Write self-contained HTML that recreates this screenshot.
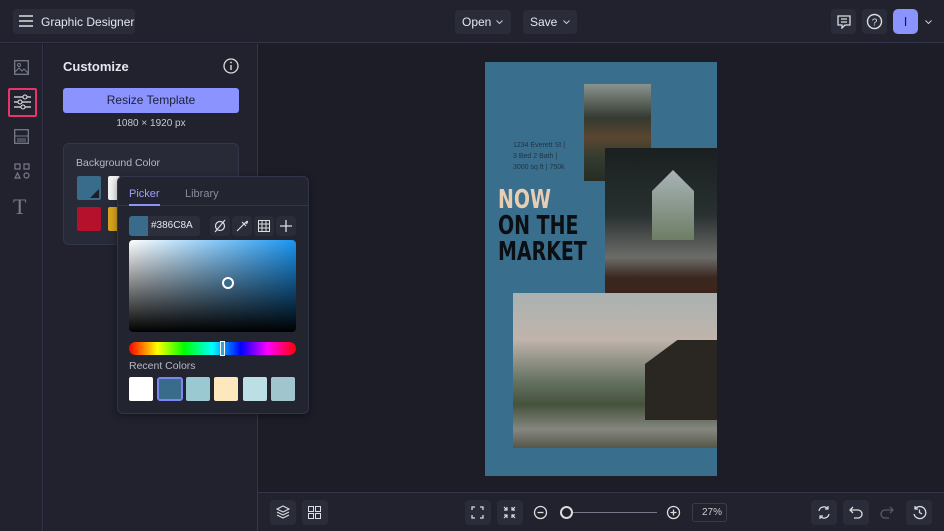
<!DOCTYPE html>
<html><head><meta charset="utf-8"><style>
*{box-sizing:border-box;margin:0;padding:0}
body{width:944px;height:531px;overflow:hidden;background:#1c1d27;font-family:"Liberation Sans",sans-serif;color:#e6e6ee;position:relative}
.abs{position:absolute}
.btn{position:absolute;background:#2a2c39;border-radius:4px}
svg{display:block}
</style></head><body>
<!-- top bar -->
<div class="abs" style="left:0;top:0;width:944px;height:43px;background:#21222e;border-bottom:1px solid #33354a"></div>
<div class="btn" style="left:13px;top:9px;width:122px;height:25px"></div>
<svg class="abs" style="left:19px;top:15px" width="14" height="12"><path d="M0 1H14M0 6H14M0 11H14" stroke="#ddd" stroke-width="1.5"/></svg>
<div class="abs" style="left:41px;top:15px;font-size:12px;color:#e6e6ee">Graphic Designer</div>
<div class="btn" style="left:455px;top:10px;width:56px;height:24px"></div>
<div class="abs" style="left:462px;top:15px;font-size:12px">Open</div>
<svg class="abs" style="left:496px;top:20px" width="7" height="4"><path d="M.5 .5L3.5 3.5L6.5 .5" fill="none" stroke="#ccc"/></svg>
<div class="btn" style="left:523px;top:10px;width:54px;height:24px"></div>
<div class="abs" style="left:530px;top:15px;font-size:12px">Save</div>
<svg class="abs" style="left:563px;top:20px" width="7" height="4"><path d="M.5 .5L3.5 3.5L6.5 .5" fill="none" stroke="#ccc"/></svg>
<div class="btn" style="left:831px;top:9px;width:25px;height:25px"></div>
<svg class="abs" style="left:837px;top:15px" width="14" height="14"><path d="M1 1H13V10H8L5 13V10H1Z M4 4H10 M4 7H10" fill="none" stroke="#ddd" stroke-width="1.3"/></svg>
<div class="btn" style="left:862px;top:9px;width:25px;height:25px"></div>
<svg class="abs" style="left:866px;top:13px" width="17" height="17"><circle cx="8.5" cy="8.5" r="7" fill="none" stroke="#ddd" stroke-width="1.4"/><text x="8.5" y="12.5" font-size="10" fill="#ddd" text-anchor="middle" font-family="Liberation Sans">?</text></svg>
<div class="abs" style="left:893px;top:9px;width:25px;height:25px;background:#8b93ff;border-radius:5px;color:#1a1a2a;font-size:13px;text-align:center;line-height:25px">I</div>
<svg class="abs" style="left:925px;top:20px" width="7" height="4"><path d="M.5 .5L3.5 3.5L6.5 .5" fill="none" stroke="#ccc"/></svg>

<!-- icon sidebar -->
<div class="abs" style="left:0;top:44px;width:43px;height:487px;background:#21222e;border-right:1px solid #33354a"></div>
<svg class="abs" style="left:14px;top:60px" width="15" height="15"><rect x="0.7" y="0.7" width="13.6" height="13.6" fill="none" stroke="#777a8c" stroke-width="1.3"/><circle cx="5" cy="5" r="1.5" fill="none" stroke="#777a8c"/><path d="M1 12L5 8L8 11L10 9L14 13" fill="none" stroke="#777a8c"/></svg>
<div class="abs" style="left:8px;top:88px;width:29px;height:29px;border:2px solid #e8336b;border-radius:2px"></div>
<svg class="abs" style="left:14px;top:94px" width="17" height="16"><path d="M0 3H17M0 8H17M0 13H17" stroke="#e6e6ee" stroke-width="1.3"/><circle cx="11" cy="3" r="2" fill="#21222e" stroke="#e6e6ee"/><circle cx="6" cy="8" r="2" fill="#21222e" stroke="#e6e6ee"/><circle cx="9" cy="13" r="2" fill="#21222e" stroke="#e6e6ee"/></svg>
<svg class="abs" style="left:14px;top:129px" width="15" height="15"><rect x="0.7" y="0.7" width="13.6" height="13.6" fill="none" stroke="#777a8c" stroke-width="1.3"/><path d="M1 7H14M3 10H12M3 12H12" stroke="#777a8c"/></svg>
<svg class="abs" style="left:14px;top:163px" width="16" height="16"><rect x="1" y="1" width="5" height="5" fill="none" stroke="#777a8c" stroke-width="1.2"/><rect x="10" y="1" width="5" height="5" fill="none" stroke="#777a8c" stroke-width="1.2"/><path d="M3.5 10L6 15H1Z" fill="none" stroke="#777a8c" stroke-width="1.2"/><circle cx="12.5" cy="12.5" r="2.5" fill="none" stroke="#777a8c" stroke-width="1.2"/></svg>
<div class="abs" style="left:13px;top:194px;font-family:'Liberation Serif',serif;font-size:22px;color:#777a8c">T</div>

<!-- panel -->
<div class="abs" style="left:44px;top:44px;width:214px;height:487px;background:#21222e;border-right:1px solid #33354a"></div>
<div class="abs" style="left:63px;top:59px;font-size:13px;font-weight:bold">Customize</div>
<svg class="abs" style="left:223px;top:58px" width="16" height="16"><circle cx="8" cy="8" r="7" fill="none" stroke="#ddd" stroke-width="1.3"/><path d="M8 7V12" stroke="#ddd" stroke-width="1.4"/><circle cx="8" cy="4.5" r="0.9" fill="#ddd"/></svg>
<div class="abs" style="left:63px;top:88px;width:176px;height:25px;background:#8b93ff;border-radius:3px;color:#1d1f3a;font-size:12px;text-align:center;line-height:25px">Resize Template</div>
<div class="abs" style="left:63px;top:118px;width:176px;text-align:center;font-size:10px;color:#c8c8d2">1080 × 1920 px</div>
<div class="abs" style="left:63px;top:143px;width:176px;height:102px;background:#282a37;border:1px solid #33354a;border-radius:6px"></div>
<div class="abs" style="left:76px;top:157px;font-size:10.5px;color:#b8b8c4">Background Color</div>
<div class="abs" style="left:77px;top:176px;width:24px;height:24px;background:#386c8a;border-radius:2px;overflow:hidden"><div style="position:absolute;right:2px;bottom:2px;width:0;height:0;border-left:9px solid transparent;border-bottom:9px solid #1c1d27"></div></div>
<div class="abs" style="left:108px;top:176px;width:12px;height:24px;background:#f2f2f2;border-radius:2px"></div>
<div class="abs" style="left:77px;top:207px;width:24px;height:24px;background:#b5102c;border-radius:2px"></div>
<div class="abs" style="left:108px;top:207px;width:12px;height:24px;background:#d8a41f;border-radius:2px"></div>

<!-- popup -->
<div class="abs" style="left:117px;top:176px;width:192px;height:238px;background:#222430;border:1px solid #33354a;border-radius:6px;box-shadow:0 2px 8px rgba(0,0,0,.4)"></div>
<div class="abs" style="left:118px;top:205px;width:190px;height:1px;background:#33354a"></div>
<div class="abs" style="left:129px;top:188px;font-size:11px;color:#9ba1ff">Picker</div>
<div class="abs" style="left:129px;top:204px;width:31px;height:2px;background:#8b93ff"></div>
<div class="abs" style="left:185px;top:188px;font-size:11px;color:#8a8c9c">Library</div>
<div class="abs" style="left:129px;top:216px;width:71px;height:20px;background:#2c2e3b;border-radius:3px"></div>
<div class="abs" style="left:129px;top:216px;width:19px;height:20px;background:#386c8a;border-radius:3px 0 0 3px"></div>
<div class="abs" style="left:151px;top:220px;font-size:10px;color:#e6e6ee">#386C8A</div>
<div class="btn" style="left:210px;top:216px;width:20px;height:20px"></div>
<svg class="abs" style="left:213px;top:219px" width="14" height="14"><circle cx="7" cy="7" r="4.5" fill="none" stroke="#ddd" stroke-width="1.2"/><path d="M2 13L12 1" stroke="#ddd" stroke-width="1.2"/></svg>
<div class="btn" style="left:232px;top:216px;width:20px;height:20px"></div>
<svg class="abs" style="left:235px;top:219px" width="14" height="14"><path d="M2 12L9 5M7 3L11 7M9 5L11 3Q12 2 12.5 2.5Q13 3 11 5" fill="none" stroke="#ddd" stroke-width="1.2"/></svg>
<div class="btn" style="left:254px;top:216px;width:20px;height:20px"></div>
<svg class="abs" style="left:258px;top:220px" width="12" height="12"><path d="M0.5 0.5H11.5V11.5H0.5ZM4 0.5V11.5M8 0.5V11.5M0.5 4H11.5M0.5 8H11.5" fill="none" stroke="#ddd"/></svg>
<div class="btn" style="left:276px;top:216px;width:20px;height:20px"></div>
<svg class="abs" style="left:280px;top:220px" width="12" height="12"><path d="M6 0V12M0 6H12" stroke="#ddd" stroke-width="1.3"/></svg>
<div class="abs" style="left:129px;top:240px;width:167px;height:92px;border-radius:4px;background:linear-gradient(to bottom,transparent,#000),linear-gradient(to right,#fff,#1a95f0)"></div>
<div class="abs" style="left:222px;top:277px;width:12px;height:12px;border:2px solid #fff;border-radius:50%;background:#386c8a"></div>
<div class="abs" style="left:129px;top:342px;width:167px;height:13px;border-radius:7px;background:linear-gradient(to right,#f00,#ff0 17%,#0f0 33%,#0ff 50%,#00f 67%,#f0f 83%,#f00)"></div>
<div class="abs" style="left:220px;top:341px;width:5px;height:15px;border:1px solid #fff;background:#3aa0d0"></div>
<div class="abs" style="left:129px;top:360px;font-size:10.5px;color:#b8b8c4">Recent Colors</div>
<div class="abs" style="left:129px;top:377px;width:24px;height:24px;background:#fff;border-radius:2px"></div>
<div class="abs" style="left:157px;top:377px;width:26px;height:24px;background:#386c8a;border:2px solid #7c86f0;border-radius:3px"></div>
<div class="abs" style="left:186px;top:377px;width:24px;height:24px;background:#9ac9d2;border-radius:2px"></div>
<div class="abs" style="left:214px;top:377px;width:24px;height:24px;background:#fde7bd;border-radius:2px"></div>
<div class="abs" style="left:243px;top:377px;width:24px;height:24px;background:#bcdfe5;border-radius:2px"></div>
<div class="abs" style="left:271px;top:377px;width:24px;height:24px;background:#a0c5cc;border-radius:2px"></div>

<!-- template -->
<div class="abs" style="left:485px;top:62px;width:232px;height:414px;background:#3a6e8d"></div>
<div class="abs" style="left:584px;top:84px;width:67px;height:97px;background:linear-gradient(to bottom,#8a948f,#343a30 35%,#5a4630 55%,#343c30 75%,#262c24)"></div>
<div class="abs" style="left:513px;top:140px;font-size:7px;line-height:11px;color:#1e3444">1234 Everett St |<br>3 Bed 2 Bath |<br>3000 sq ft | 750k</div>
<div class="abs" style="left:498px;top:187px;font-family:'DejaVu Sans','Liberation Sans',sans-serif;font-weight:bold;font-size:26px;line-height:26px;color:#0c0f12;transform:scaleX(0.73);transform-origin:left;white-space:nowrap"><span style="color:#e8cdb2">NOW</span><br>ON THE<br>MARKET</div>
<div class="abs" style="left:605px;top:148px;width:112px;height:166px;background:linear-gradient(to bottom,#1a201f,#283030 40%,#6c6c68 66%,#3a2820 78%,#401e14)"></div>
<div class="abs" style="left:652px;top:170px;width:42px;height:70px;background:linear-gradient(#a8b4b8,#6d7e64);clip-path:polygon(0 30%,50% 0,100% 30%,100% 100%,0 100%)"></div>
<div class="abs" style="left:513px;top:293px;width:204px;height:155px;background:linear-gradient(to bottom,#aab2b0,#c0b4ac 30%,#62705f 58%,#46523c 72%,#85877f 88%,#555549)"></div>
<div class="abs" style="left:645px;top:340px;width:72px;height:80px;background:#2a2622;clip-path:polygon(0 30%,45% 0,100% 0,100% 100%,0 100%)"></div>

<!-- bottom bar -->
<div class="abs" style="left:258px;top:492px;width:686px;height:39px;background:#21222e;border-top:1px solid #33354a"></div>
<div class="btn" style="left:270px;top:500px;width:26px;height:25px"></div>
<svg class="abs" style="left:276px;top:505px" width="14" height="14"><path d="M7 1L13 4L7 7L1 4Z M1 7L7 10L13 7 M1 10L7 13L13 10" fill="none" stroke="#ddd" stroke-width="1.1"/></svg>
<div class="btn" style="left:302px;top:500px;width:26px;height:25px"></div>
<svg class="abs" style="left:308px;top:506px" width="13" height="13"><path d="M.5 .5H5.5V5.5H.5ZM7.5 .5H12.5V5.5H7.5ZM.5 7.5H5.5V12.5H.5ZM7.5 7.5H12.5V12.5H7.5Z" fill="none" stroke="#ddd"/></svg>
<div class="btn" style="left:465px;top:500px;width:26px;height:25px"></div>
<svg class="abs" style="left:471px;top:506px" width="13" height="13"><path d="M1 4V1H4M9 1H12V4M12 9V12H9M4 12H1V9" fill="none" stroke="#ddd" stroke-width="1.3"/></svg>
<div class="btn" style="left:497px;top:500px;width:26px;height:25px"></div>
<svg class="abs" style="left:503px;top:506px" width="13" height="13"><path d="M1 4H4V1M9 1V4H12M12 9H9V12M4 12V9H1M4 4L1 1M9 4L12 1M9 9L12 12M4 9L1 12" fill="none" stroke="#ddd" stroke-width="1.2"/></svg>
<svg class="abs" style="left:533px;top:505px" width="15" height="15"><circle cx="7.5" cy="7.5" r="6" fill="none" stroke="#ddd" stroke-width="1.3"/><path d="M4.5 7.5H10.5" stroke="#ddd" stroke-width="1.3"/></svg>
<div class="abs" style="left:560px;top:512px;width:97px;height:1px;background:#77798a"></div>
<div class="abs" style="left:560px;top:506px;width:13px;height:13px;border:2px solid #ddd;border-radius:50%;background:#21222e"></div>
<svg class="abs" style="left:666px;top:505px" width="15" height="15"><circle cx="7.5" cy="7.5" r="6" fill="none" stroke="#ddd" stroke-width="1.3"/><path d="M4.5 7.5H10.5M7.5 4.5V10.5" stroke="#ddd" stroke-width="1.3"/></svg>
<div class="abs" style="left:692px;top:503px;width:35px;height:19px;border:1px solid #3a3c4c;border-radius:3px;font-size:10px;color:#ccc;text-align:right;padding-right:4px;line-height:17px">27%</div>
<div class="btn" style="left:811px;top:500px;width:26px;height:25px"></div>
<svg class="abs" style="left:817px;top:505px" width="14" height="15"><path d="M2 6A5 5 0 0 1 11 4M12 9A5 5 0 0 1 3 11M11 1V4H8M3 14V11H6" fill="none" stroke="#ddd" stroke-width="1.2"/></svg>
<div class="btn" style="left:843px;top:500px;width:26px;height:25px"></div>
<svg class="abs" style="left:849px;top:506px" width="14" height="13"><path d="M4 1L1 4L4 7M1 4H9A4 4 0 0 1 9 12H5" fill="none" stroke="#ddd" stroke-width="1.3"/></svg>
<svg class="abs" style="left:880px;top:506px" width="14" height="13"><path d="M10 1L13 4L10 7M13 4H5A4 4 0 0 0 5 12H9" fill="none" stroke="#555868" stroke-width="1.3"/></svg>
<div class="btn" style="left:906px;top:500px;width:26px;height:25px"></div>
<svg class="abs" style="left:912px;top:505px" width="15" height="15"><path d="M3 4A6 6 0 1 1 2 9M3 1V4H6M7.5 4.5V7.5L10 9" fill="none" stroke="#ddd" stroke-width="1.3"/></svg>
</body></html>
